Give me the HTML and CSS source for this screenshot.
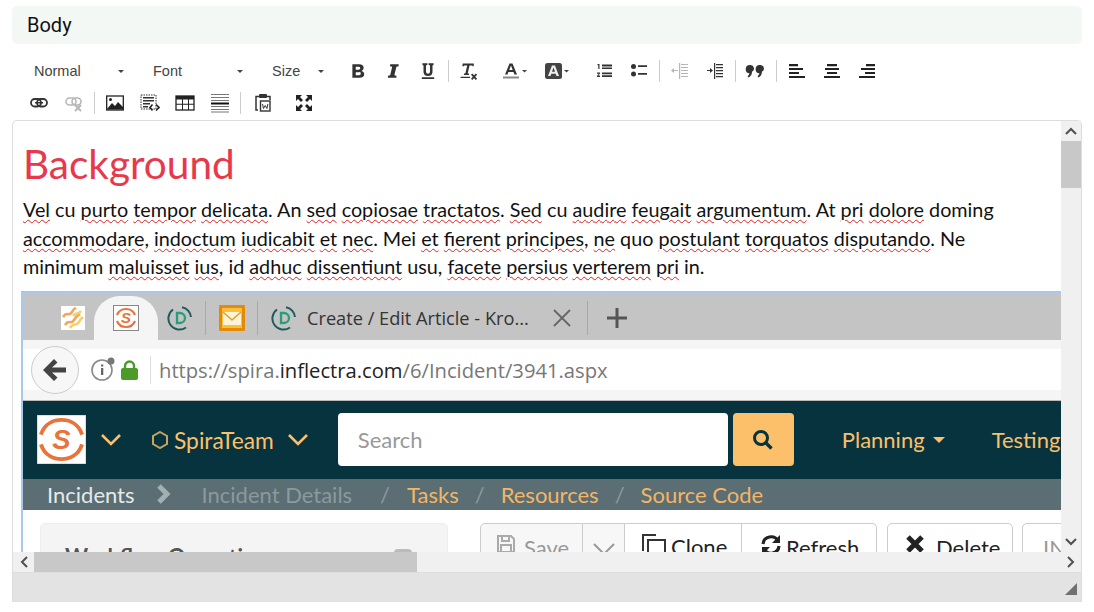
FILE: index.html
```html
<!DOCTYPE html>
<html>
<head>
	<title>Edit Body</title>
	<link rel="stylesheet" href="styles.css">
</head>
<body>
	<div class="field-title">Body</div>

	<div class="toolbar">
		<div class="tool-row">
			<span class="combo combo-format">Normal<i class="caret"></i></span>
			<span class="combo combo-font">Font<i class="caret"></i></span>
			<span class="combo combo-size">Size<i class="caret"></i></span>
			<span class="btn"><svg width="18" height="18" viewBox="0 0 16 16"><path fill="#333" fill-rule="evenodd" d="M3 2h6q4 0 4 3.300 0 2-1.900 2.600 2.400.5 2.400 3 0 3.100-4 3.100H3zm3 2.300v2.600h2.500q1.500 0 1.500-1.300t-1.500-1.300zM6 9v2.700h3q1.500 0 1.500-1.400T9 9z"/></svg></span>
			<span class="btn"><svg width="18" height="18" viewBox="0 0 16 16"><path fill="#333" d="M5.500 2H13v1.800l-2 .4-1.800 7.600 1.800.4V14H3.500v-1.800l2-.4L7.300 4.200l-2-.4z"/></svg></span>
			<span class="btn"><svg width="18" height="18" viewBox="0 0 16 16"><path fill="#333" d="M3 1h4.500v1.500L6.200 3v5.500q0 2 1.800 2t1.800-2V3l-1.300-.5V1H13v1.500L12 3v5.500q0 4-4 4t-4-4V3l-1-.5zM2.500 13.500h11V15h-11z"/></svg></span>
			<span class="sep"></span>
			<span class="btn"><svg width="19" height="19" viewBox="0 0 18 18"><path fill="#333" d="M3.500 1.500H14v2.600h-1.200l-.1-.8H10L8.200 10.800H9.500v1.500H4.700v-1.500H6L7.800 3.300H5l-.5.8H3.200zM1.500 14h9v1.200h-9z"/><path stroke="#333" stroke-width="1.700" d="M12 11.500l4.500 5M16.500 11.500l-4.500 5"/></svg></span>
			<span class="btn-color"><svg width="26" height="18" viewBox="0 0 26 18"><path fill="#333" fill-rule="evenodd" d="M7.500 1.500h3L15 12.500h-2.600l-.9-2.500H6.400l-.9 2.500H3zM7.200 8h3.500L9 3.600z"/><path fill="#888" d="M1 14.500h16v2H1z"/><path fill="#444" d="M20 8h5l-2.500 2.500z"/></svg></span>
			<span class="btn-color"><svg width="26" height="18" viewBox="0 0 26 18"><rect x="1" y="1" width="17" height="16" rx="2.500" fill="#444"/><path fill="#eee" fill-rule="evenodd" d="M8 3.500h3l4 10.500h-2.500l-.8-2.300H7.300L6.500 14H4zM8 9.800h3L9.500 5.600z"/><path fill="#444" d="M20 8h5l-2.500 2.500z"/></svg></span>
			<span class="btn btn-list"><svg width="18" height="18" viewBox="0 0 18 18"><path fill="#333" d="M2.500 2h2v5H3.300V3.200H2.500zM2 10.500h3v1l-1.700 2H5V15H2v-1l1.700-2.200H2zM7 2.500h10v2H7zM7 5.500h10v1.500H7zM7 10.500h10v1.800H7zM7 13.300h10v1.700H7z"/></svg></span>
			<span class="btn"><svg width="18" height="18" viewBox="0 0 18 18"><circle cx="3.500" cy="4.500" r="2.500" fill="#333"/><circle cx="3.500" cy="12" r="2.500" fill="#333"/><path fill="#333" d="M8 3.200h9v1.700H8zM8 11h9v1.700H8z"/></svg></span>
			<span class="sep"></span>
			<span class="btn"><svg width="18" height="18" viewBox="0 0 18 18" opacity=".35"><path fill="#333" d="M10 2h7v1h-7zM10 5h7v1h-7zM10 8h7v1h-7zM10 11h7v1h-7zM10 14h7v1h-7zM8 1h1.200v16H8zM7 8H3V6L0 8.500 3 11V9h4z"/></svg></span>
			<span class="btn"><svg width="18" height="18" viewBox="0 0 18 18"><path fill="#333" d="M10 2h7v1.200h-7zM10 5h7v1.200h-7zM10 8h7v1.200h-7zM10 11h7v1.200h-7zM10 14h7v1.200h-7zM8 1h1.200v16H8zM1 8h3V6l3 2.500L4 11V9H1z"/></svg></span>
			<span class="sep"></span>
			<span class="btn"><svg width="21" height="21" viewBox="0 0 18 18"><path fill="#333" d="M4.500 3.500a3 3 0 0 1 1.500 5.700c0 2.300-1 4-3 5l-.8-1.200c1-.7 1.500-1.500 1.600-2.500a3 3 0 0 1 .7-7zM13 3.500a3 3 0 0 1 1.500 5.700c0 2.300-1 4-3 5l-.8-1.200c1-.7 1.500-1.500 1.600-2.500a3 3 0 0 1 .7-7z"/></svg></span>
			<span class="sep"></span>
			<span class="btn"><svg width="16" height="16" viewBox="0 0 16 16"><path fill="#222" d="M0 1h9v2.200H0zM0 5h14v2H0zM0 9h10v2H0zM0 13h16v2H0z"/></svg></span>
			<span class="btn"><svg width="16" height="16" viewBox="0 0 16 16"><path fill="#222" d="M3 1h10v2.200H3zM1 5h14v2H1zM3 9h10v2H3zM0 13h16v2H0z"/></svg></span>
			<span class="btn"><svg width="16" height="16" viewBox="0 0 16 16"><path fill="#222" d="M7 1h9v2.200H7zM2 5h14v2H2zM6 9h10v2H6zM0 13h16v2H0z"/></svg></span>
		</div>
		<div class="tool-row">
			<span class="btn btn-first"><svg width="18" height="18" viewBox="0 0 18 18"><rect x="1" y="5" width="10" height="7.500" rx="3.700" fill="none" stroke="#333" stroke-width="1.800"/><rect x="7" y="5" width="10" height="7.500" rx="3.700" fill="none" stroke="#333" stroke-width="1.800"/><path stroke="#333" stroke-width="1.500" d="M5 8.750h8"/></svg></span>
			<span class="btn"><svg width="18" height="18" viewBox="0 0 18 18" opacity=".35"><rect x="1" y="4" width="10" height="7" rx="3.500" fill="none" stroke="#333" stroke-width="1.600"/><rect x="7" y="4" width="9" height="7" rx="3.500" fill="none" stroke="#333" stroke-width="1.600"/><path stroke="#333" stroke-width="2" d="M10 11l6 6M16 11l-6 6"/></svg></span>
			<span class="sep"></span>
			<span class="btn"><svg width="18" height="16" viewBox="0 0 18 16"><rect x="0.700" y="1" width="16.600" height="14" fill="none" stroke="#222" stroke-width="1.300"/><path fill="#222" d="M1 14l5-6 3 3 3-4 5 5v2.500H1z"/><circle cx="4.500" cy="4.500" r="1.500" fill="#222"/></svg></span>
			<span class="btn"><svg width="20" height="18" viewBox="0 0 20 18"><rect x="1" y="1" width="15" height="14" fill="none" stroke="#333" stroke-dasharray="1.500 1"/><path fill="#333" d="M3 3h11v1.500H3zM3 6h11v1.500H3zM3 9h7v1.500H3zM3 12h5v1.500H3z"/><path fill="none" stroke="#222" stroke-width="1.600" d="M12.500 10.500L10 13.500l2.500 3M16 10.500l3 3-3 3"/></svg></span>
			<span class="btn"><svg width="20" height="16" viewBox="0 0 20 16"><rect x="1" y="1" width="18" height="14" fill="none" stroke="#222" stroke-width="1.300"/><path fill="#222" d="M1 1h18v3.500H1zM1 8.800h18v1H1zM7 4h1v11H7zM13 4h1v11h-1z"/></svg></span>
			<span class="btn"><svg width="18" height="20" viewBox="0 0 18 20"><path fill="#777" d="M0 1h18v1H0zM0 4h18v1H0zM0 7h18v1H0zM0 13h18v1H0zM0 16h18v1H0zM0 18.500h18v1H0z"/><path fill="#111" d="M0 9.500h18v2H0z"/></svg></span>
			<span class="sep"></span>
			<span class="btn btn-paste"><svg width="18" height="20" viewBox="0 0 18 20"><path fill="none" stroke="#333" stroke-width="1.500" d="M4 17H2V3.500h3M13 3.500h3V7"/><rect x="5" y="1" width="8" height="4" rx="1" fill="#333"/><rect x="6.500" y="8" width="9.500" height="10" fill="none" stroke="#333" stroke-width="1.400"/><path fill="none" stroke="#333" d="M8.500 11l1 4.500 1.700-3 1.700 3 1-4.500"/></svg></span>
			<span class="btn btn-max"><svg width="18" height="18" viewBox="0 0 18 18"><path fill="#222" d="M1 1h6L5 3l3 3-2 2-3-3-2 2zM17 1v6l-2-2-3 3-2-2 3-3-2-2zM1 17v-6l2 2 3-3 2 2-3 3 2 2zM17 17h-6l2-2-3-3 2-2 3 3 2-2z"/></svg></span>
		</div>
	</div>

	<div class="editor">
		<div class="editor-view">
			<div class="doc">
				<h1 class="doc-heading">Background</h1>
				<p class="doc-text"><u>Vel</u> cu <u>purto</u> <u>tempor</u> <u>delicata</u>. An <u>sed</u> <u>copiosae</u> <u>tractatos</u>. <u>Sed</u> cu <u>audire</u> <u>feugait</u> <u>argumentum</u>. At <u>pri</u> <u>dolore</u> doming <u>accommodare</u>, <u>indoctum</u> <u>iudicabit</u> <u>et</u> <u>nec</u>. Mei <u>et</u> <u>fierent</u> <u>principes</u>, <u>ne</u> quo <u>postulant</u> <u>torquatos</u> <u>disputando</u>. Ne minimum <u>maluisset</u> <u>ius</u>, id <u>adhuc</u> <u>dissentiunt</u> usu, <u>facete</u> <u>persius</u> <u>verterem</u> <u>pri</u> in.</p>

				<div class="shot">
					<div class="shot-tabs">
						<span class="favicon"><svg width="24" height="24" viewBox="0 0 24 24"><rect width="24" height="24" fill="#fff"/><path fill="none" stroke="#f0a65c" stroke-width="2.500" d="M2 11c4-6 6 0 9-5s3-3 4-4M4 19c4-6 6 0 9-5s5-5 6-6"/><path fill="none" stroke="#f5cf6a" stroke-width="2.500" d="M9 22c4-6 6-1 9-6s2-3 4-5M12 10c3-4 5-1 8-5"/></svg></span>
						<span class="tab-active"><svg width="26" height="26" viewBox="0 0 26 26"><rect x=".5" y=".5" width="25" height="25" fill="#fff" stroke="#888"/><path fill="none" stroke="#e8743b" stroke-width="2.200" d="M4 10c2-5 6-6 9-6s7 1 9 6M4 16c2 5 6 6 9 6s7-1 9-6"/><text x="13" y="18" class="logo-s logo-s-sm">S</text></svg></span>
						<span class="favicon fav-d"><svg width="26" height="26" viewBox="0 0 26 26"><use href="#kro"/></svg></span>
						<span class="tab-sep"></span>
						<span class="favicon"><svg width="26" height="26" viewBox="0 0 26 26"><rect width="26" height="26" rx="1" fill="#e48a05"/><rect x="3" y="3" width="20" height="20" fill="#fbbf3f"/><path fill="#fff4d8" d="M4 7h18v13H4z"/><path fill="none" stroke="#e0a030" stroke-width="1.500" d="M4 7l9 8 9-8"/></svg></span>
						<span class="tab-sep"></span>
						<span class="favicon fav-d2"><svg width="26" height="26" viewBox="0 0 26 26"><symbol id="kro" viewBox="0 0 26 26"><path fill="none" stroke="#1f5c5c" stroke-width="2" d="M6 4.500A11 11 0 0 0 19 22.500M15 2.200A11 11 0 0 1 24 12"/><path fill="none" stroke="#2a9d78" stroke-width="2.300" d="M10 8h3a5 5 0 0 1 0 10h-3z"/></symbol><use href="#kro"/></svg></span>
						<span class="tab-title">Create / Edit Article - Kro...</span>
						<svg class="tab-close" width="18" height="18" viewBox="0 0 18 18"><path stroke="#666" stroke-width="1.800" d="M1 1l16 16M17 1L1 17"/></svg>
						<span class="tab-sep tab-sep-b"></span>
						<svg class="tab-new" width="20" height="20" viewBox="0 0 20 20"><path fill="#555" d="M8.500 0h3v8.500H20v3h-8.500V20h-3v-8.500H0v-3h8.500z"/></svg>
					</div>
					<div class="shot-url">
						<span class="back-btn"><svg width="24" height="22" viewBox="0 0 24 22"><path fill="#444" d="M11 0l3.500 3.500L9 8.500h14v5H9l5.500 5L11 22 0 11z"/></svg></span>
						<svg class="info-icon" width="24" height="24" viewBox="0 0 24 24"><circle cx="11" cy="13" r="10" fill="none" stroke="#888" stroke-width="1.600"/><path fill="#666" d="M10 11h2.300v7H10zM10 7.500h2.300v2H10z"/><circle cx="20" cy="4" r="3.500" fill="#777"/></svg>
						<svg class="lock-icon" width="17" height="20" viewBox="0 0 17 20"><path fill="none" stroke="#4c9a2a" stroke-width="2.400" d="M4 9V6a4.500 4.500 0 0 1 9 0v3"/><rect y="8" width="17" height="12" rx="2" fill="#4c9a2a"/></svg>
						<span class="url-sep"></span>
						<span class="url-text">https://spira.<b>inflectra.com</b>/6/Incident/3941.aspx</span>
					</div>
					<div class="shot-nav">
						<span class="app-logo"><svg width="49" height="49" viewBox="0 0 50 50"><rect width="50" height="50" fill="#fff" stroke="#bbb"/><path fill="none" stroke="#e8743b" stroke-width="4" d="M4 20C8 8 18 5 25 5s17 3 21 15M4 30c4 12 14 15 21 15s17-3 21-15"/><text x="25" y="35" class="logo-s">S</text></svg></span>
						<svg class="chev chev-a" width="20" height="12" viewBox="0 0 20 12"><path fill="none" stroke="#fcc06b" stroke-width="2.600" d="M1 1l9 9 9-9"/></svg>
						<svg class="hex" width="16" height="18" viewBox="0 0 16 18"><path fill="none" stroke="#c9a660" stroke-width="2" d="M8 1l7 4v8l-7 4-7-4V5z"/></svg>
						<span class="product">SpiraTeam</span>
						<svg class="chev chev-b" width="20" height="12" viewBox="0 0 20 12"><path fill="none" stroke="#fcc06b" stroke-width="2.600" d="M1 1l9 9 9-9"/></svg>
						<span class="search-box">Search</span>
						<span class="search-btn"><svg width="22" height="22" viewBox="0 0 22 22"><circle cx="9" cy="9" r="6.500" fill="none" stroke="#07333f" stroke-width="3"/><path stroke="#07333f" stroke-width="3.400" d="M13.500 13.500l6 6"/></svg></span>
						<span class="nav-item">Planning<i class="nav-caret"></i></span>
						<span class="nav-item nav-testing">Testing</span>
					</div>
					<div class="shot-crumbs">
						<span class="crumb-main">Incidents</span>
						<svg class="crumb-chev" width="16" height="20" viewBox="0 0 16 20"><path fill="none" stroke="#a3b0b2" stroke-width="5" d="M3 2l8 8-8 8"/></svg>
						<span class="crumb-dim">Incident Details</span>
						<span class="crumb-slash crumb-slash-a">/</span>
						<span class="crumb-link">Tasks</span>
						<span class="crumb-slash">/</span>
						<span class="crumb-link">Resources</span>
						<span class="crumb-slash">/</span>
						<span class="crumb-link">Source Code</span>
					</div>
					<div class="shot-main">
						<div class="panel"><span class="panel-title">Workflow Operations</span><span class="panel-toggle"></span></div>
						<div class="actions">
							<div class="btn-group">
								<span class="act act-save"><svg width="20" height="20" viewBox="0 0 20 20"><path fill="none" stroke="#aaa" stroke-width="2" d="M2 2h13l3 3v13H2zM6 2v5h7V2M5 18v-7h10v7"/></svg>Save</span>
								<span class="act act-drop"><svg width="24" height="14" viewBox="0 0 24 14"><path fill="none" stroke="#999" stroke-width="2" d="M2 2l10 10L22 2"/></svg></span>
								<span class="act act-clone"><svg width="26" height="26" viewBox="0 0 26 26"><path fill="none" stroke="#333" stroke-width="2" d="M2 18V2h13M7 7h17v18H7z"/></svg>Clone</span>
								<span class="act act-refresh"><svg width="22" height="22" viewBox="0 0 22 22"><path fill="none" stroke="#222" stroke-width="3.200" d="M3 10a8 8 0 0 1 15-3M19 12a8 8 0 0 1-15 3"/><path fill="#222" d="M20 1v8h-8zM2 21v-8h8z"/></svg>Refresh</span>
							</div>
							<span class="act act-single"><svg width="20" height="20" viewBox="0 0 20 20"><path stroke="#222" stroke-width="5" d="M3 3l14 14M17 3L3 17"/></svg>Delete</span>
							<span class="act act-last">IN</span>
						</div>
					</div>
				</div>
			</div>
		</div>
		<div class="scroll-v">
			<span class="scroll-end"><svg width="12" height="8" viewBox="0 0 12 8"><path fill="none" stroke="#505050" stroke-width="2" d="M1 7l5-5 5 5"/></svg></span>
			<span class="scroll-track"><span class="thumb-v"></span></span>
			<span class="scroll-end"><svg width="12" height="8" viewBox="0 0 12 8"><path fill="none" stroke="#505050" stroke-width="2" d="M1 1l5 5 5-5"/></svg></span>
		</div>
		<div class="scroll-h">
			<span class="scroll-end-h"><svg width="8" height="12" viewBox="0 0 8 12"><path fill="none" stroke="#505050" stroke-width="2" d="M7 1L2 6l5 5"/></svg></span>
			<span class="scroll-track-h"><span class="thumb-h"></span></span>
			<span class="scroll-end-h"><svg width="8" height="12" viewBox="0 0 8 12"><path fill="none" stroke="#505050" stroke-width="2" d="M1 1l5 5-5 5"/></svg></span>
		</div>
		<div class="status-bar"><span class="resize-grip"></span></div>
	</div>
</body>
</html>
```

FILE: styles.css
```css
/* page */
body {
	margin: 0;
	padding: 6px 12px 0;
	background: #fff;
	font-family: "Lato", sans-serif;
	color: #111;
	overflow: hidden;
}

.field-title {
	height: 38px;
	line-height: 38px;
	padding-left: 15px;
	background: #f4f8f5;
	border-radius: 5px;
	font-family: "Roboto", sans-serif;
	font-size: 20px;
}

/* toolbar */
.toolbar {
	height: 76px;
	padding-top: 11px;
	box-sizing: border-box;
}

.tool-row {
	display: flex;
	align-items: center;
	height: 32px;
}

.combo {
	display: flex;
	justify-content: space-between;
	align-items: center;
	font-family: "Liberation Sans", sans-serif;
	font-size: 14.500px;
	color: #444;
	box-sizing: border-box;
	flex: none;
}

.combo-format {
	width: 114px;
	padding: 0 2px 0 22px;
}

.combo-font {
	width: 119px;
	padding: 0 2px 0 27px;
}

.combo-size {
	width: 81px;
	margin-right: 14px;
	padding: 0 2px 0 27px;
}

.caret {
	border: 3px solid transparent;
	border-top-color: #444;
	border-bottom: 0;
}

.btn {
	width: 35px;
	display: flex;
	justify-content: center;
	align-items: center;
	flex: none;
}

.btn-color {
	display: flex;
	margin-left: 16px;
	flex: none;
}

.btn-list {
	margin-left: 16px;
}

.btn-first {
	margin-left: 9px;
}

.btn-paste {
	margin-left: 2px;
}

.btn-max {
	margin-left: 6px;
}

.sep {
	width: 1px;
	height: 22px;
	margin: 0 2px 0 3px;
	background: #ccc;
	flex: none;
}

/* editor box */
.editor {
	height: 482px;
	box-sizing: border-box;
	border: 1px solid #ddd;
	border-bottom: 0;
	border-radius: 5px 5px 0 0;
	display: grid;
	grid-template-columns: 1fr 20px;
	grid-template-rows: 431px 21px 29px;
	overflow: hidden;
}

.editor-view {
	overflow: hidden;
}

.doc {
	padding: 19px 0 0 10px;
	width: 1090px;
}

.doc-heading {
	margin: 0;
	font-size: 40.500px;
	line-height: 48px;
	font-weight: 400;
	color: #e8394c;
}

.doc-text {
	margin: 7px 0 0;
	width: 1010px;
	font-size: 19.770px;
	line-height: 28.500px;
	color: #111;
}

.doc-text u {
	text-decoration: underline wavy #e02020 1px;
	text-underline-offset: 2px;
}

/* pasted screenshot */
.shot {
	margin: 10px 0 0 -2px;
	width: 1080px;
	border-top: 2px solid #a8c8ec;
	border-left: 2px solid #a8c8ec;
	box-sizing: border-box;
}

.shot-tabs {
	height: 47px;
	background: #c4c4c4;
	display: flex;
	align-items: center;
	padding: 4px 0 0 38px;
	box-sizing: border-box;
}

.favicon {
	display: flex;
	flex: none;
}

.tab-active {
	width: 64px;
	height: 44px;
	margin-left: 9px;
	align-self: flex-end;
	background: #f5f5f5;
	border-radius: 26px 26px 0 0;
	display: flex;
	justify-content: center;
	align-items: center;
	flex: none;
}

.fav-d {
	margin-left: 9px;
}

.tab-sep {
	width: 1px;
	height: 34px;
	background: #a8a8a8;
	margin: 0 13px 0 12px;
	flex: none;
}

.fav-d2 {
	margin-right: 10px;
}

.tab-title {
	font-family: "Open Sans", sans-serif;
	font-size: 18.200px;
	color: #333;
	white-space: nowrap;
	width: 238px;
	flex: none;
}

.tab-close {
	margin-left: 8px;
	flex: none;
}

.tab-sep-b {
	margin: 0 19px 0 16px;
}

.tab-new {
	flex: none;
}

.shot-url {
	height: 61px;
	display: flex;
	align-items: center;
	box-sizing: border-box;
	padding-left: 8px;
	border-bottom: 1px solid #bbb;
	background-image: linear-gradient(#f5f5f5 9px, #fff 9px, #fff 50px, #f5f5f5 50px);
}

.back-btn {
	width: 48px;
	height: 48px;
	border-radius: 50%;
	background: #f7f7f7;
	border: 1px solid #ccc;
	box-sizing: border-box;
	display: flex;
	justify-content: center;
	align-items: center;
	flex: none;
}

.info-icon {
	margin: 0 0 2px 12px;
	flex: none;
}

.lock-icon {
	margin-left: 6px;
	flex: none;
}

.url-sep {
	width: 1px;
	height: 28px;
	background: #ddd;
	margin: 0 8px 0 12px;
	flex: none;
}

.url-text {
	font-family: "Open Sans", sans-serif;
	font-size: 20.200px;
	color: #777;
	white-space: nowrap;
}

.url-text b {
	font-weight: 400;
	color: #222;
}

.shot-nav {
	height: 78px;
	background: #07333f;
	display: flex;
	align-items: center;
	padding-left: 14px;
	box-sizing: border-box;
}

.app-logo {
	display: flex;
	flex: none;
}

.logo-s {
	font-family: "Liberation Sans", sans-serif;
	font-size: 28px;
	font-weight: 700;
	font-style: italic;
	fill: #e8743b;
	text-anchor: middle;
}

.logo-s-sm {
	font-size: 15px;
}

.chev {
	flex: none;
}

.chev-a {
	margin-left: 15px;
}

.hex {
	margin-left: 31px;
	flex: none;
}

.product {
	margin-left: 6px;
	font-size: 22.800px;
	color: #fcc06b;
	white-space: nowrap;
}

.chev-b {
	margin-left: 14px;
}

.search-box {
	width: 390px;
	height: 53px;
	line-height: 53px;
	margin-left: 30px;
	padding-left: 20px;
	box-sizing: border-box;
	background: #fff;
	border-radius: 4px;
	font-size: 22px;
	color: #999;
	flex: none;
}

.search-btn {
	width: 61px;
	height: 53px;
	margin-left: 5px;
	background: #fcc06b;
	border-radius: 4px;
	display: flex;
	justify-content: center;
	align-items: center;
	flex: none;
}

.nav-item {
	margin-left: 48px;
	font-size: 22px;
	color: #fcc06b;
	white-space: nowrap;
	display: flex;
	align-items: center;
}

.nav-testing {
	margin-left: 47px;
}

.nav-caret {
	margin-left: 8px;
	border: 6px solid transparent;
	border-top-color: #fcc06b;
	border-bottom: 0;
}

.shot-crumbs {
	height: 31px;
	background: #5a6e73;
	display: flex;
	align-items: center;
	padding-left: 24px;
	box-sizing: border-box;
	font-size: 22px;
	white-space: nowrap;
}

.crumb-main {
	color: #e6eaea;
}

.crumb-chev {
	margin-left: 21px;
	flex: none;
}

.crumb-dim {
	margin-left: 30px;
	color: #8a9a9e;
}

.crumb-slash {
	margin: 0 16px;
	color: #8a9a9e;
}

.crumb-slash-a {
	margin-left: 28px;
	margin-right: 17px;
}

.crumb-link {
	color: #f5b565;
}

.shot-main {
	display: flex;
	align-items: flex-start;
	background: #fff;
	height: 80px;
	padding: 13px 0 0 17px;
	box-sizing: border-box;
}

.panel {
	width: 408px;
	height: 90px;
	background: #f4f4f4;
	border: 1px solid #eee;
	border-radius: 5px;
	box-sizing: border-box;
	padding: 19px 35px 0 24px;
	display: flex;
	justify-content: space-between;
	font-size: 22px;
	font-weight: 700;
	color: #555;
	flex: none;
}

.panel-toggle {
	width: 18px;
	height: 20px;
	margin-top: 6px;
	background: #bbb;
	border-radius: 4px;
}

.actions {
	display: flex;
	margin-left: 32px;
	gap: 10px;
}

.btn-group {
	display: flex;
}

.act {
	height: 60px;
	padding-top: 10px;
	box-sizing: border-box;
	display: flex;
	align-items: flex-start;
	gap: 4px;
	background: #fff;
	border: 1px solid #ccc;
	border-left: 0;
	font-size: 22px;
	color: #222;
	white-space: nowrap;
	flex: none;
}

.act-save {
	width: 103px;
	padding-left: 15px;
	gap: 8px;
	color: #999;
	background: #f7f7f7;
	border-left: 1px solid #ccc;
	border-radius: 5px 0 0 0;
}

.act-drop {
	width: 42px;
	justify-content: center;
	padding-top: 18px;
	background: #f7f7f7;
}

.act-clone {
	width: 117px;
	padding-left: 16px;
	padding-top: 9px;
}

.act-refresh {
	width: 135px;
	padding-left: 18px;
	border-radius: 0 5px 0 0;
}

.act-single {
	width: 126px;
	padding-left: 17px;
	gap: 11px;
	border-left: 1px solid #ccc;
	border-radius: 5px 5px 0 0;
}

.act-last {
	width: 80px;
	margin-left: -1px;
	padding-left: 20px;
	border-left: 1px solid #ccc;
	border-radius: 5px 0 0 0;
	color: #999;
}

/* fake scrollbars */
.scroll-v {
	background: #f0f0f0;
	display: flex;
	flex-direction: column;
}

.scroll-end {
	height: 20px;
	display: flex;
	justify-content: center;
	align-items: center;
	flex: none;
}

.scroll-track {
	flex: 1;
}

.thumb-v {
	display: block;
	height: 47px;
	background: #c8c8c8;
}

.scroll-h {
	grid-column: 1 / 3;
	background: #f0f0f0;
	display: flex;
	border-bottom: 1px solid #ddd;
}

.scroll-end-h {
	width: 21px;
	display: flex;
	justify-content: center;
	align-items: center;
	flex: none;
}

.scroll-track-h {
	flex: 1;
}

.thumb-h {
	display: block;
	width: 383px;
	height: 20px;
	background: #c8c8c8;
}

.status-bar {
	grid-column: 1 / 3;
	background: #e3e3e3;
	display: flex;
	justify-content: flex-end;
	align-items: flex-end;
	padding: 0 4px 7px 0;
}

.resize-grip {
	width: 0;
	height: 0;
	border-style: solid;
	border-width: 0 0 12px 12px;
	border-color: transparent transparent #707070 transparent;
}
```
